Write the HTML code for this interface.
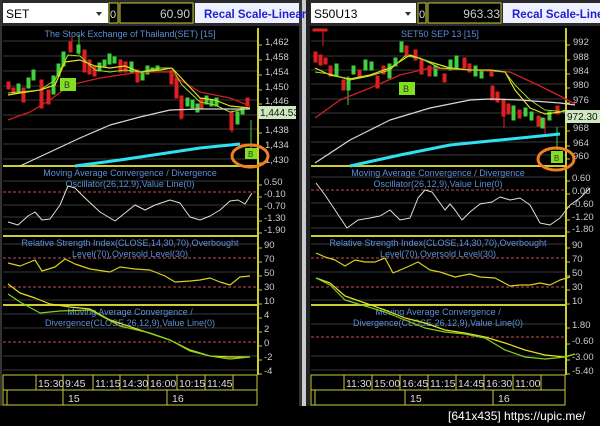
<!DOCTYPE html>
<html><head><meta charset="utf-8"><style>
html,body{margin:0;padding:0;background:#000;width:600px;height:426px;overflow:hidden}
svg{display:block}
text{font-family:"Liberation Sans",sans-serif}
</style></head><body>
<svg width="600" height="426" viewBox="0 0 600 426" xmlns="http://www.w3.org/2000/svg">
<rect width="600" height="426" fill="#000"/>
<!-- separator -->
<rect x="299" y="0" width="3" height="406" fill="#333"/>
<rect x="302" y="0" width="4" height="406" fill="#c8ccd0"/>
<rect x="306" y="0" width="4" height="406" fill="#222"/>
<rect x="0" y="0" width="2" height="406" fill="#333"/>

<!-- ===== LEFT HEADER ===== -->
<rect x="2" y="0" width="297" height="26" fill="#2a2a2a"/>
<rect x="3" y="3" width="105" height="20" fill="#fff"/>
<text x="6" y="18" font-size="12" fill="#000">SET</text>
<path d="M96 12 l6 0 l-3 4z" fill="#333"/>
<rect x="109" y="3" width="9" height="20" fill="#000" stroke="#cc3" stroke-width="1"/>
<text x="110" y="18" font-size="11" fill="#ddd">0</text>
<rect x="120" y="3" width="73" height="20" fill="#000" stroke="#cc3" stroke-width="1"/>
<text x="190" y="18" font-size="12" fill="#ccc" text-anchor="end">60.90</text>
<rect x="195" y="3" width="104" height="20" fill="#eef0ff"/>
<text x="204" y="18" font-size="11.5" font-weight="bold" fill="#2222cc">Recal Scale-Linear</text>

<!-- ===== RIGHT HEADER ===== -->
<rect x="310" y="0" width="290" height="26" fill="#2a2a2a"/>
<rect x="311" y="3" width="105" height="20" fill="#fff"/>
<text x="314" y="18" font-size="12" fill="#000">S50U13</text>
<path d="M405 12 l6 0 l-3 4z" fill="#333"/>
<rect x="418" y="3" width="8" height="20" fill="#000" stroke="#cc3"/>
<text x="419" y="18" font-size="11" fill="#ddd">0</text>
<rect x="428" y="3" width="73" height="20" fill="#000" stroke="#cc3"/>
<text x="500" y="18" font-size="12" fill="#ccc" text-anchor="end">963.33</text>
<rect x="503" y="3" width="97" height="20" fill="#eef0ff"/>
<text x="512" y="18" font-size="11.5" font-weight="bold" fill="#2222cc">Recal Scale-Linea</text>

<!-- ===== LEFT PANELS ===== -->
<g stroke="#3a3a3a" stroke-width="1">
<line x1="3" y1="41" x2="257" y2="41"/><line x1="3" y1="56" x2="257" y2="56"/><line x1="3" y1="71" x2="257" y2="71"/><line x1="3" y1="86" x2="257" y2="86"/><line x1="3" y1="100" x2="257" y2="100"/><line x1="3" y1="115" x2="257" y2="115"/><line x1="3" y1="129" x2="257" y2="129"/><line x1="3" y1="144" x2="257" y2="144"/><line x1="3" y1="159" x2="257" y2="159"/>
<line x1="3" y1="181" x2="257" y2="181"/><line x1="3" y1="205" x2="257" y2="205"/><line x1="3" y1="217" x2="257" y2="217"/><line x1="3" y1="229" x2="257" y2="229"/>
<line x1="3" y1="244" x2="257" y2="244"/><line x1="3" y1="272" x2="257" y2="272"/><line x1="3" y1="300" x2="257" y2="300"/>
<line x1="3" y1="314" x2="257" y2="314"/><line x1="3" y1="328" x2="257" y2="328"/><line x1="3" y1="356" x2="257" y2="356"/><line x1="3" y1="370" x2="257" y2="370"/>
</g>
<g stroke="#cc3" stroke-width="2" fill="none">
<line x1="258" y1="28" x2="258" y2="375"/>
<line x1="3" y1="166" x2="258" y2="166"/>
<line x1="3" y1="236" x2="258" y2="236"/>
<line x1="3" y1="305" x2="258" y2="305"/>
</g>
<g stroke="#cc3" stroke-width="1" fill="none">
<rect x="3" y="375" width="254" height="30"/><line x1="3" y1="390" x2="257" y2="390"/>
<line x1="36" y1="375" x2="36" y2="390"/><line x1="63" y1="375" x2="63" y2="405"/><line x1="93" y1="375" x2="93" y2="390"/><line x1="120" y1="375" x2="120" y2="390"/><line x1="148" y1="375" x2="148" y2="390"/><line x1="177" y1="375" x2="177" y2="390"/><line x1="205" y1="375" x2="205" y2="390"/><line x1="233" y1="375" x2="233" y2="390"/><line x1="167" y1="390" x2="167" y2="405"/><line x1="7" y1="390" x2="7" y2="405"/>
</g>
<g font-size="10.5" fill="#ddd">
<text x="38" y="387">15:30</text><text x="65" y="387">9:45</text><text x="95" y="387">11:15</text><text x="122" y="387">14:30</text><text x="150" y="387">16:00</text><text x="179" y="387">10:15</text><text x="207" y="387">11:45</text>
<text x="68" y="402">15</text><text x="172" y="402">16</text>
</g>
<!-- axis labels left -->
<g font-size="9.5" fill="#ccc">
<text x="265" y="45">1,462</text><text x="265" y="60">1,458</text><text x="265" y="75">1,454</text><text x="265" y="90">1,450</text><text x="265" y="104">1,446</text><text x="265" y="133">1,438</text><text x="265" y="148">1,434</text><text x="265" y="163">1,430</text>
<text x="264" y="185">0.50</text><text x="264" y="197">-0.10</text><text x="264" y="209">-0.70</text><text x="264" y="221">-1.30</text><text x="264" y="233">-1.90</text>
<text x="264" y="248">90</text><text x="264" y="262">70</text><text x="264" y="276">50</text><text x="264" y="290">30</text><text x="264" y="304">10</text>
<text x="264" y="318">4</text><text x="264" y="332">2</text><text x="264" y="346">0</text><text x="264" y="360">-2</text><text x="264" y="374">-4</text>
</g>
<g stroke="#cc3" stroke-width="1"><path d="M258 45h4M258 60h4M258 75h4M258 90h4M258 104h4M258 133h4M258 148h4M258 163h4M258 185h4M258 197h4M258 209h4M258 221h4M258 233h4M258 248h4M258 262h4M258 276h4M258 290h4M258 304h4M258 318h4M258 332h4M258 346h4M258 360h4M258 374h4"/></g>
<rect x="258" y="106" width="38" height="13" fill="#cfe8c0"/>
<text x="260" y="116" font-size="10" fill="#111">1,444.53</text>

<g font-size="9" fill="#5b8fd8" text-anchor="middle">
<text x="130" y="37">The Stock Exchange of Thailand(SET) [15]</text>
<text x="130" y="176">Moving Average Convergence / Divergence</text>
<text x="130" y="187">Oscillator(26,12,9),Value Line(0)</text>
<text x="130" y="246">Relative Strength Index(CLOSE,14,30,70),Overbought</text>
<text x="130" y="257">Level(70),Oversold Level(30)</text>
<text x="130" y="315">Moving Average Convergence /</text>
<text x="130" y="326">Divergence(CLOSE,26,12,9),Value Line(0)</text>
</g>
<!-- candles left -->
<g stroke-width="1">
<g fill="#e02020" stroke="#e02020">
<rect x="7" y="82" width="3" height="7"/><rect x="12" y="88" width="3" height="5"/><rect x="22" y="88" width="3" height="14"/><rect x="40" y="80" width="3" height="28"/><rect x="47" y="90" width="3" height="14"/><rect x="69" y="42" width="3" height="10"/><rect x="83" y="50" width="3" height="22"/><rect x="88" y="60" width="3" height="14"/><rect x="93" y="66" width="3" height="10"/><rect x="119" y="60" width="3" height="12"/><rect x="124" y="62" width="3" height="10"/><rect x="136" y="70" width="3" height="12"/><rect x="170" y="70" width="3" height="14"/><rect x="175" y="78" width="3" height="20"/><rect x="180" y="96" width="3" height="22"/><rect x="200" y="98" width="3" height="10"/><rect x="230" y="112" width="3" height="18"/><rect x="246" y="98" width="3" height="8"/>
<line x1="72" y1="35" x2="72" y2="52"/><line x1="181" y1="96" x2="181" y2="120"/><line x1="232" y1="110" x2="232" y2="133"/>
</g>
<g fill="#40d040" stroke="#40d040">
<rect x="17" y="84" width="3" height="8"/><rect x="27" y="78" width="3" height="10"/><rect x="32" y="70" width="3" height="10"/><rect x="52" y="76" width="3" height="18"/><rect x="57" y="64" width="3" height="12"/><rect x="62" y="52" width="3" height="14"/><rect x="77" y="45" width="3" height="8"/><rect x="98" y="63" width="3" height="8"/><rect x="103" y="60" width="3" height="6"/><rect x="108" y="54" width="3" height="10"/><rect x="113" y="57" width="3" height="6"/><rect x="130" y="62" width="3" height="10"/><rect x="141" y="72" width="3" height="8"/><rect x="146" y="66" width="3" height="8"/><rect x="151" y="68" width="3" height="4"/><rect x="156" y="66" width="3" height="4"/><rect x="186" y="98" width="3" height="8"/><rect x="191" y="100" width="3" height="8"/><rect x="196" y="104" width="3" height="8"/><rect x="205" y="96" width="3" height="8"/><rect x="210" y="100" width="3" height="6"/><rect x="215" y="98" width="3" height="8"/><rect x="236" y="112" width="3" height="12"/><rect x="241" y="108" width="3" height="6"/>
<line x1="79" y1="34" x2="79" y2="55"/><line x1="251" y1="120" x2="251" y2="152"/>
</g>
</g>
<g fill="none" stroke-linejoin="round">
<polyline points="8,120 30,112 50,100 70,85 100,78 140,72 170,72 180,80 200,92 230,98 250,106" stroke="#d02020" stroke-width="1.3"/>
<polyline points="8,95 20,93 40,90 55,85 65,62 80,60 95,66 110,68 125,66 140,72 160,70 172,68 185,82 200,98 215,100 230,106 250,108" stroke="#e8e020" stroke-width="1.2"/>
<polyline points="8,93 20,92 40,90 55,80 68,55 80,56 95,70 110,72 125,70 140,72 160,68 172,68 182,85 200,102 215,105 230,112 250,108" stroke="#9be030" stroke-width="1"/>
<polyline points="20,166 50,152 80,138 110,125 140,117 170,110 200,109 250,109" stroke="#d8d8d8" stroke-width="1.2"/>
<polyline points="75,166 120,160 160,154 200,148 240,144" stroke="#30e0f0" stroke-width="3"/>
<line x1="3" y1="192" x2="257" y2="192" stroke="#c05050" stroke-dasharray="3,2"/>
<line x1="3" y1="258" x2="257" y2="258" stroke="#c05050" stroke-dasharray="3,2"/>
<line x1="3" y1="287" x2="257" y2="287" stroke="#c05050" stroke-dasharray="3,2"/>
<line x1="3" y1="342" x2="257" y2="342" stroke="#c05050" stroke-dasharray="3,2"/>
<polyline points="8,222 18,225 28,216 35,212 42,220 50,219 60,205 68,186 75,188 85,198 100,212 115,221 125,213 135,205 145,210 155,205 170,200 180,203 190,217 200,220 210,216 220,210 230,201 238,200 245,204 252,193" stroke="#e0e0d0" stroke-width="1"/>
<polyline points="8,263 20,266 35,260 42,271 55,267 65,259 75,264 90,269 110,272 120,267 135,269 150,270 165,276 175,282 190,281 200,280 210,278 220,282 230,285 240,277 250,276" stroke="#d8d020" stroke-width="1.2"/>
<polyline points="8,284 20,293 35,298 50,304 70,307 90,309 110,320 140,330 170,340 190,350 210,356 230,357 250,357" stroke="#e8e020" stroke-width="1.2"/>
<polyline points="8,294 20,302 40,313 60,311 90,310 120,326 150,333 170,340 190,351 210,356 230,359 250,357" stroke="#80d020" stroke-width="1.2"/>
</g>
<rect x="60" y="78" width="16" height="13" fill="#80e020"/><text x="64" y="88" font-size="9" fill="#333">B</text>
<rect x="245" y="148" width="12" height="11" fill="#80e020"/><text x="248" y="157" font-size="8" fill="#333">B</text>
<ellipse cx="250" cy="156" rx="18" ry="11" fill="none" stroke="#f08020" stroke-width="3"/>

<!-- ===== RIGHT PANELS ===== -->
<g stroke="#3a3a3a" stroke-width="1">
<line x1="311" y1="41" x2="565" y2="41"/><line x1="311" y1="56" x2="565" y2="56"/><line x1="311" y1="70" x2="565" y2="70"/><line x1="311" y1="84" x2="565" y2="84"/><line x1="311" y1="99" x2="565" y2="99"/><line x1="311" y1="113" x2="565" y2="113"/><line x1="311" y1="127" x2="565" y2="127"/><line x1="311" y1="142" x2="565" y2="142"/><line x1="311" y1="155" x2="565" y2="155"/>
<line x1="311" y1="177" x2="565" y2="177"/><line x1="311" y1="203" x2="565" y2="203"/><line x1="311" y1="216" x2="565" y2="216"/><line x1="311" y1="228" x2="565" y2="228"/>
<line x1="311" y1="244" x2="565" y2="244"/><line x1="311" y1="272" x2="565" y2="272"/><line x1="311" y1="300" x2="565" y2="300"/>
<line x1="311" y1="324" x2="565" y2="324"/><line x1="311" y1="356" x2="565" y2="356"/><line x1="311" y1="370" x2="565" y2="370"/>
</g>
<g stroke="#cc3" stroke-width="2" fill="none">
<line x1="566" y1="28" x2="566" y2="375"/>
<line x1="311" y1="166" x2="566" y2="166"/>
<line x1="311" y1="236" x2="566" y2="236"/>
<line x1="311" y1="305" x2="566" y2="305"/>
</g>
<g stroke="#cc3" stroke-width="1" fill="none">
<rect x="311" y="375" width="254" height="30"/><line x1="311" y1="390" x2="565" y2="390"/>
<line x1="344" y1="375" x2="344" y2="390"/><line x1="372" y1="375" x2="372" y2="390"/><line x1="400" y1="375" x2="400" y2="390"/><line x1="428" y1="375" x2="428" y2="390"/><line x1="456" y1="375" x2="456" y2="390"/><line x1="484" y1="375" x2="484" y2="390"/><line x1="513" y1="375" x2="513" y2="390"/><line x1="541" y1="375" x2="541" y2="390"/><line x1="405" y1="390" x2="405" y2="405"/><line x1="493" y1="390" x2="493" y2="405"/><line x1="315" y1="390" x2="315" y2="405"/>
</g>
<g font-size="10.5" fill="#ddd">
<text x="346" y="387">11:30</text><text x="374" y="387">15:00</text><text x="402" y="387">16:45</text><text x="430" y="387">11:15</text><text x="458" y="387">14:45</text><text x="486" y="387">16:30</text><text x="515" y="387">11:00</text>
<text x="410" y="402">15</text><text x="498" y="402">16</text>
</g>
<g font-size="9.5" fill="#ccc">
<text x="573" y="45">992</text><text x="573" y="60">988</text><text x="573" y="74">984</text><text x="573" y="88">980</text><text x="573" y="103">976</text><text x="573" y="131">968</text><text x="573" y="146">964</text><text x="573" y="159">960</text>
<text x="572" y="181">0.60</text><text x="572" y="194">0.00</text><text x="572" y="207">-0.60</text><text x="572" y="220">-1.20</text><text x="572" y="232">-1.80</text>
<text x="572" y="248">90</text><text x="572" y="262">70</text><text x="572" y="276">50</text><text x="572" y="290">30</text><text x="572" y="304">10</text>
<text x="572" y="328">1.80</text><text x="572" y="344">-0.60</text><text x="572" y="360">-3.00</text><text x="572" y="374">-5.40</text>
</g>
<g stroke="#cc3" stroke-width="1"><path d="M566 45h4M566 60h4M566 74h4M566 88h4M566 103h4M566 131h4M566 146h4M566 159h4M566 181h4M566 194h4M566 207h4M566 220h4M566 232h4M566 248h4M566 262h4M566 276h4M566 290h4M566 304h4M566 328h4M566 344h4M566 360h4M566 374h4"/></g>
<rect x="565" y="110" width="35" height="13" fill="#cfe8c0"/>
<text x="567" y="120" font-size="10" fill="#111">972.30</text>

<g font-size="9" fill="#5b8fd8" text-anchor="middle">
<text x="440" y="37">SET50 SEP 13    [15]</text>
<text x="438" y="176">Moving Average Convergence / Divergence</text>
<text x="438" y="187">Oscillator(26,12,9),Value Line(0)</text>
<text x="438" y="246">Relative Strength Index(CLOSE,14,30,70),Overbought</text>
<text x="438" y="257">Level(70),Oversold Level(30)</text>
<text x="438" y="315">Moving Average Convergence /</text>
<text x="438" y="326">Divergence(CLOSE,26,12,9),Value Line(0)</text>
</g>
<g stroke-width="1">
<g fill="#e02020" stroke="#e02020">
<rect x="313" y="29" width="14" height="2"/><line x1="323" y1="29" x2="323" y2="46"/>
<rect x="314" y="52" width="3" height="10"/><rect x="319" y="55" width="3" height="10"/><rect x="324" y="58" width="3" height="6"/><rect x="329" y="66" width="3" height="10"/><rect x="342" y="80" width="3" height="10"/><rect x="358" y="70" width="3" height="8"/><rect x="376" y="76" width="3" height="12"/><rect x="382" y="66" width="3" height="8"/><rect x="405" y="46" width="3" height="10"/><rect x="414" y="50" width="3" height="10"/><rect x="420" y="60" width="3" height="14"/><rect x="428" y="66" width="3" height="10"/><rect x="443" y="74" width="3" height="8"/><rect x="463" y="58" width="3" height="10"/><rect x="468" y="64" width="3" height="8"/><rect x="490" y="70" width="3" height="6"/><rect x="491" y="86" width="3" height="14"/><rect x="496" y="92" width="3" height="10"/><rect x="502" y="100" width="3" height="16"/><rect x="507" y="104" width="3" height="10"/><rect x="518" y="110" width="3" height="8"/><rect x="537" y="116" width="3" height="10"/><rect x="556" y="106" width="3" height="8"/>
<line x1="504" y1="98" x2="504" y2="128"/><line x1="545" y1="118" x2="545" y2="134"/>
</g>
<g fill="#40d040" stroke="#40d040">
<rect x="335" y="64" width="3" height="12"/><rect x="347" y="78" width="3" height="12"/><rect x="352" y="66" width="3" height="8"/><rect x="364" y="60" width="3" height="10"/><rect x="370" y="62" width="3" height="8"/><rect x="388" y="64" width="3" height="14"/><rect x="394" y="58" width="3" height="8"/><rect x="400" y="42" width="3" height="10"/><rect x="434" y="66" width="3" height="10"/><rect x="449" y="60" width="3" height="10"/><rect x="455" y="56" width="3" height="12"/><rect x="474" y="66" width="3" height="10"/><rect x="480" y="70" width="3" height="8"/><rect x="512" y="106" width="3" height="14"/><rect x="524" y="108" width="3" height="8"/><rect x="530" y="112" width="3" height="8"/><rect x="541" y="118" width="3" height="10"/><rect x="548" y="112" width="3" height="8"/>
<line x1="348" y1="76" x2="348" y2="105"/><line x1="557" y1="127" x2="557" y2="150"/>
</g>
</g>
<g fill="none" stroke-linejoin="round">
<polyline points="315,118 340,100 370,88 400,75 430,68 470,70 510,72 540,86 560,96 575,104" stroke="#d02020" stroke-width="1.3"/>
<polyline points="315,68 330,75 350,79 370,75 390,68 410,55 430,62 450,68 470,70 490,70 505,72 515,90 530,108 545,114 560,112 566,110" stroke="#e8e020" stroke-width="1.2"/>
<polyline points="315,72 330,74 350,80 370,76 390,70 405,56 420,58 440,68 470,70 490,70 505,72 515,85 530,100 545,110 566,112" stroke="#9be030" stroke-width="1"/>
<polyline points="315,163 350,140 390,120 430,108 470,100 490,99 520,100 560,103 575,105" stroke="#d8d8d8" stroke-width="1.2"/>
<polyline points="350,166 400,155 450,145 500,140 560,134" stroke="#30e0f0" stroke-width="3"/>
<line x1="311" y1="190" x2="565" y2="190" stroke="#c05050" stroke-dasharray="3,2"/>
<line x1="311" y1="258" x2="565" y2="258" stroke="#c05050" stroke-dasharray="3,2"/>
<line x1="311" y1="287" x2="565" y2="287" stroke="#c05050" stroke-dasharray="3,2"/>
<line x1="311" y1="337" x2="565" y2="337" stroke="#c05050" stroke-dasharray="3,2"/>
<polyline points="316,183 325,195 335,210 347,228 358,220 370,218 380,216 390,210 400,220 410,218 418,198 425,190 432,192 440,203 445,210 450,204 455,210 462,220 470,212 480,204 492,202 500,197 510,200 520,198 530,205 540,223 550,225 560,218 570,205 580,198 590,188" stroke="#e0e0d0" stroke-width="1"/>
<polyline points="316,253 325,257 335,260 345,266 355,260 365,262 375,262 385,258 393,273 405,268 418,262 430,270 440,272 455,277 470,274 480,277 495,278 510,286 520,285 530,285 540,283 550,285 560,280 570,277" stroke="#d8d020" stroke-width="1.2"/>
<polyline points="316,278 330,283 345,296 365,303 385,310 405,318 425,323 445,330 465,333 485,337 505,343 525,350 545,355 565,357 575,354" stroke="#e8e020" stroke-width="1.2"/>
<polyline points="316,278 330,285 345,300 365,306 385,312 405,320 425,328 445,332 465,334 485,338 505,350 525,357 545,359 565,357 575,354" stroke="#80d020" stroke-width="1.2"/>
</g>
<rect x="399" y="82" width="16" height="13" fill="#80e020"/><text x="403" y="92" font-size="9" fill="#333">B</text>
<rect x="551" y="151" width="12" height="12" fill="#80e020"/><text x="554" y="161" font-size="8" fill="#333">B</text>
<ellipse cx="556" cy="159" rx="18" ry="11" fill="none" stroke="#f08020" stroke-width="3"/>

<text x="448" y="420" font-size="12" fill="#fff" font-family="Liberation Mono, monospace">[641x435] https://upic.me/</text>
</svg>
</body></html>
